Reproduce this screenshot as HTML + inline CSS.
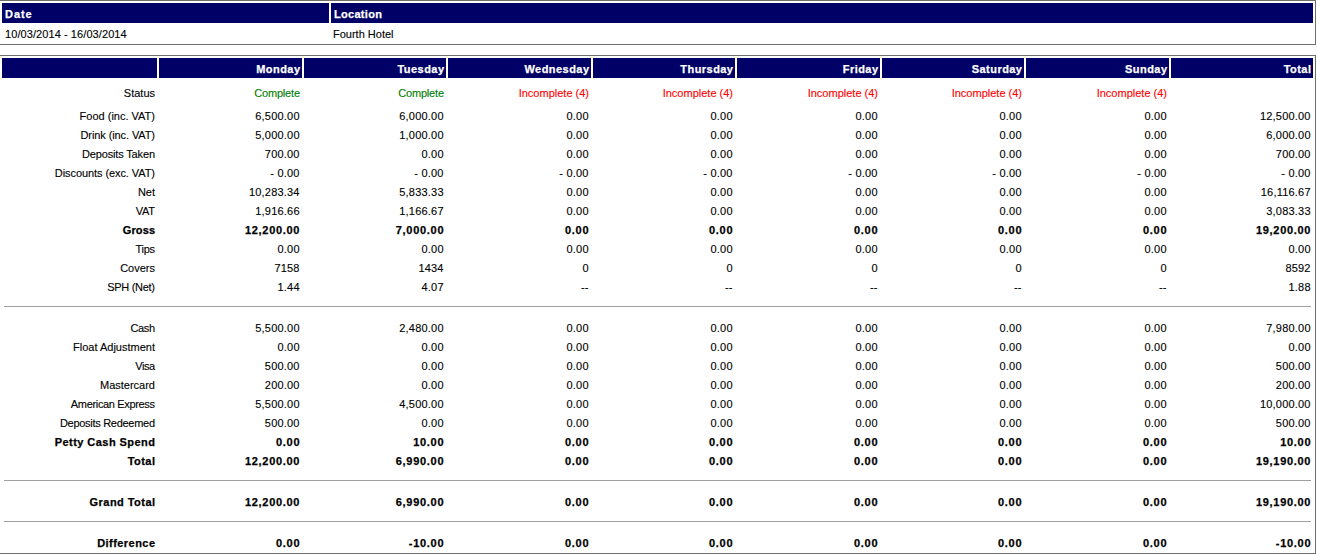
<!DOCTYPE html>
<html><head><meta charset="utf-8"><style>
html,body{margin:0;padding:0;background:#fff;width:1317px;height:554px;overflow:hidden;position:relative}
div,span{position:absolute;box-sizing:content-box}
span{font-family:"Liberation Sans",sans-serif;font-size:11px;line-height:13px;white-space:nowrap}
.r{-webkit-text-stroke:0.12px currentColor}
.b{font-weight:bold;-webkit-text-stroke:0.25px currentColor}
</style></head><body>
<div style="left:-1px;top:0px;width:1315px;height:43px;border:1px solid #6f6f6f"></div>
<div style="left:2px;top:3px;width:327px;height:20px;background:#000066"></div>
<div style="left:331px;top:3px;width:982px;height:20px;background:#000066"></div>
<span class="b" style="left:5px;top:8px;color:#fff;letter-spacing:0.95px">Date</span>
<span class="b" style="left:334px;top:8px;color:#fff;letter-spacing:0.3px">Location</span>
<span class="r" style="left:5px;top:28px;color:#000;letter-spacing:0.08px">10/03/2014 - 16/03/2014</span>
<span class="r" style="left:333px;top:28px;color:#000;letter-spacing:0.0px">Fourth Hotel</span>
<div style="left:-1px;top:55px;width:1315px;height:497px;border:1px solid #6f6f6f"></div>
<div style="left:2px;top:58px;width:155px;height:20px;background:#000066"></div>
<div style="left:159px;top:58px;width:143px;height:20px;background:#000066"></div>
<div style="left:304px;top:58px;width:142px;height:20px;background:#000066"></div>
<div style="left:448px;top:58px;width:143px;height:20px;background:#000066"></div>
<div style="left:593px;top:58px;width:142px;height:20px;background:#000066"></div>
<div style="left:737px;top:58px;width:143px;height:20px;background:#000066"></div>
<div style="left:882px;top:58px;width:142px;height:20px;background:#000066"></div>
<div style="left:1026px;top:58px;width:143px;height:20px;background:#000066"></div>
<div style="left:1171px;top:58px;width:142px;height:20px;background:#000066"></div>
<span class="b rt" style="right:1016.55px;top:63px;color:#fff;letter-spacing:0.45px">Monday</span>
<span class="b rt" style="right:872.55px;top:63px;color:#fff;letter-spacing:0.45px">Tuesday</span>
<span class="b rt" style="right:727.55px;top:63px;color:#fff;letter-spacing:0.45px">Wednesday</span>
<span class="b rt" style="right:583.55px;top:63px;color:#fff;letter-spacing:0.45px">Thursday</span>
<span class="b rt" style="right:438.55px;top:63px;color:#fff;letter-spacing:0.45px">Friday</span>
<span class="b rt" style="right:294.55px;top:63px;color:#fff;letter-spacing:0.45px">Saturday</span>
<span class="b rt" style="right:149.55px;top:63px;color:#fff;letter-spacing:0.45px">Sunday</span>
<span class="b rt" style="right:5.55px;top:63px;color:#fff;letter-spacing:0.45px">Total</span>
<span class="r rt" style="right:1162.00px;top:87px;color:#000;letter-spacing:0.0px">Status</span>
<span class="r rt" style="right:1017.20px;top:87px;color:#008000;letter-spacing:-0.2px">Complete</span>
<span class="r rt" style="right:873.20px;top:87px;color:#008000;letter-spacing:-0.2px">Complete</span>
<span class="r rt" style="right:728.00px;top:87px;color:#ff0000;letter-spacing:0.0px">Incomplete (4)</span>
<span class="r rt" style="right:584.00px;top:87px;color:#ff0000;letter-spacing:0.0px">Incomplete (4)</span>
<span class="r rt" style="right:439.00px;top:87px;color:#ff0000;letter-spacing:0.0px">Incomplete (4)</span>
<span class="r rt" style="right:295.00px;top:87px;color:#ff0000;letter-spacing:0.0px">Incomplete (4)</span>
<span class="r rt" style="right:150.00px;top:87px;color:#ff0000;letter-spacing:0.0px">Incomplete (4)</span>
<span class="r rt" style="right:1162.00px;top:110px;color:#000;letter-spacing:0.0px">Food (inc. VAT)</span>
<span class="r rt" style="right:1017.30px;top:110px;color:#000;letter-spacing:0.2px">6,500.00</span>
<span class="r rt" style="right:873.30px;top:110px;color:#000;letter-spacing:0.2px">6,000.00</span>
<span class="r rt" style="right:728.30px;top:110px;color:#000;letter-spacing:0.2px">0.00</span>
<span class="r rt" style="right:584.30px;top:110px;color:#000;letter-spacing:0.2px">0.00</span>
<span class="r rt" style="right:439.30px;top:110px;color:#000;letter-spacing:0.2px">0.00</span>
<span class="r rt" style="right:295.30px;top:110px;color:#000;letter-spacing:0.2px">0.00</span>
<span class="r rt" style="right:150.30px;top:110px;color:#000;letter-spacing:0.2px">0.00</span>
<span class="r rt" style="right:6.30px;top:110px;color:#000;letter-spacing:0.2px">12,500.00</span>
<span class="r rt" style="right:1162.10px;top:129px;color:#000;letter-spacing:-0.1px">Drink (inc. VAT)</span>
<span class="r rt" style="right:1017.30px;top:129px;color:#000;letter-spacing:0.2px">5,000.00</span>
<span class="r rt" style="right:873.30px;top:129px;color:#000;letter-spacing:0.2px">1,000.00</span>
<span class="r rt" style="right:728.30px;top:129px;color:#000;letter-spacing:0.2px">0.00</span>
<span class="r rt" style="right:584.30px;top:129px;color:#000;letter-spacing:0.2px">0.00</span>
<span class="r rt" style="right:439.30px;top:129px;color:#000;letter-spacing:0.2px">0.00</span>
<span class="r rt" style="right:295.30px;top:129px;color:#000;letter-spacing:0.2px">0.00</span>
<span class="r rt" style="right:150.30px;top:129px;color:#000;letter-spacing:0.2px">0.00</span>
<span class="r rt" style="right:6.30px;top:129px;color:#000;letter-spacing:0.2px">6,000.00</span>
<span class="r rt" style="right:1162.15px;top:148px;color:#000;letter-spacing:-0.15px">Deposits Taken</span>
<span class="r rt" style="right:1017.30px;top:148px;color:#000;letter-spacing:0.2px">700.00</span>
<span class="r rt" style="right:873.30px;top:148px;color:#000;letter-spacing:0.2px">0.00</span>
<span class="r rt" style="right:728.30px;top:148px;color:#000;letter-spacing:0.2px">0.00</span>
<span class="r rt" style="right:584.30px;top:148px;color:#000;letter-spacing:0.2px">0.00</span>
<span class="r rt" style="right:439.30px;top:148px;color:#000;letter-spacing:0.2px">0.00</span>
<span class="r rt" style="right:295.30px;top:148px;color:#000;letter-spacing:0.2px">0.00</span>
<span class="r rt" style="right:150.30px;top:148px;color:#000;letter-spacing:0.2px">0.00</span>
<span class="r rt" style="right:6.30px;top:148px;color:#000;letter-spacing:0.2px">700.00</span>
<span class="r rt" style="right:1162.08px;top:167px;color:#000;letter-spacing:-0.08px">Discounts (exc. VAT)</span>
<span class="r rt" style="right:1017.30px;top:167px;color:#000;letter-spacing:0.2px">- 0.00</span>
<span class="r rt" style="right:873.30px;top:167px;color:#000;letter-spacing:0.2px">- 0.00</span>
<span class="r rt" style="right:728.30px;top:167px;color:#000;letter-spacing:0.2px">- 0.00</span>
<span class="r rt" style="right:584.30px;top:167px;color:#000;letter-spacing:0.2px">- 0.00</span>
<span class="r rt" style="right:439.30px;top:167px;color:#000;letter-spacing:0.2px">- 0.00</span>
<span class="r rt" style="right:295.30px;top:167px;color:#000;letter-spacing:0.2px">- 0.00</span>
<span class="r rt" style="right:150.30px;top:167px;color:#000;letter-spacing:0.2px">- 0.00</span>
<span class="r rt" style="right:6.30px;top:167px;color:#000;letter-spacing:0.2px">- 0.00</span>
<span class="r rt" style="right:1162.00px;top:186px;color:#000;letter-spacing:0.0px">Net</span>
<span class="r rt" style="right:1017.30px;top:186px;color:#000;letter-spacing:0.2px">10,283.34</span>
<span class="r rt" style="right:873.30px;top:186px;color:#000;letter-spacing:0.2px">5,833.33</span>
<span class="r rt" style="right:728.30px;top:186px;color:#000;letter-spacing:0.2px">0.00</span>
<span class="r rt" style="right:584.30px;top:186px;color:#000;letter-spacing:0.2px">0.00</span>
<span class="r rt" style="right:439.30px;top:186px;color:#000;letter-spacing:0.2px">0.00</span>
<span class="r rt" style="right:295.30px;top:186px;color:#000;letter-spacing:0.2px">0.00</span>
<span class="r rt" style="right:150.30px;top:186px;color:#000;letter-spacing:0.2px">0.00</span>
<span class="r rt" style="right:6.30px;top:186px;color:#000;letter-spacing:0.2px">16,116.67</span>
<span class="r rt" style="right:1162.30px;top:205px;color:#000;letter-spacing:-0.3px">VAT</span>
<span class="r rt" style="right:1017.30px;top:205px;color:#000;letter-spacing:0.2px">1,916.66</span>
<span class="r rt" style="right:873.30px;top:205px;color:#000;letter-spacing:0.2px">1,166.67</span>
<span class="r rt" style="right:728.30px;top:205px;color:#000;letter-spacing:0.2px">0.00</span>
<span class="r rt" style="right:584.30px;top:205px;color:#000;letter-spacing:0.2px">0.00</span>
<span class="r rt" style="right:439.30px;top:205px;color:#000;letter-spacing:0.2px">0.00</span>
<span class="r rt" style="right:295.30px;top:205px;color:#000;letter-spacing:0.2px">0.00</span>
<span class="r rt" style="right:150.30px;top:205px;color:#000;letter-spacing:0.2px">0.00</span>
<span class="r rt" style="right:6.30px;top:205px;color:#000;letter-spacing:0.2px">3,083.33</span>
<span class="b rt" style="right:1161.90px;top:224px;color:#000;letter-spacing:0.1px">Gross</span>
<span class="b rt" style="right:1016.80px;top:224px;color:#000;letter-spacing:0.7px">12,200.00</span>
<span class="b rt" style="right:872.80px;top:224px;color:#000;letter-spacing:0.7px">7,000.00</span>
<span class="b rt" style="right:727.80px;top:224px;color:#000;letter-spacing:0.7px">0.00</span>
<span class="b rt" style="right:583.80px;top:224px;color:#000;letter-spacing:0.7px">0.00</span>
<span class="b rt" style="right:438.80px;top:224px;color:#000;letter-spacing:0.7px">0.00</span>
<span class="b rt" style="right:294.80px;top:224px;color:#000;letter-spacing:0.7px">0.00</span>
<span class="b rt" style="right:149.80px;top:224px;color:#000;letter-spacing:0.7px">0.00</span>
<span class="b rt" style="right:5.80px;top:224px;color:#000;letter-spacing:0.7px">19,200.00</span>
<span class="r rt" style="right:1162.30px;top:243px;color:#000;letter-spacing:-0.3px">Tips</span>
<span class="r rt" style="right:1017.30px;top:243px;color:#000;letter-spacing:0.2px">0.00</span>
<span class="r rt" style="right:873.30px;top:243px;color:#000;letter-spacing:0.2px">0.00</span>
<span class="r rt" style="right:728.30px;top:243px;color:#000;letter-spacing:0.2px">0.00</span>
<span class="r rt" style="right:584.30px;top:243px;color:#000;letter-spacing:0.2px">0.00</span>
<span class="r rt" style="right:439.30px;top:243px;color:#000;letter-spacing:0.2px">0.00</span>
<span class="r rt" style="right:295.30px;top:243px;color:#000;letter-spacing:0.2px">0.00</span>
<span class="r rt" style="right:150.30px;top:243px;color:#000;letter-spacing:0.2px">0.00</span>
<span class="r rt" style="right:6.30px;top:243px;color:#000;letter-spacing:0.2px">0.00</span>
<span class="r rt" style="right:1162.00px;top:262px;color:#000;letter-spacing:0.0px">Covers</span>
<span class="r rt" style="right:1017.30px;top:262px;color:#000;letter-spacing:0.2px">7158</span>
<span class="r rt" style="right:873.30px;top:262px;color:#000;letter-spacing:0.2px">1434</span>
<span class="r rt" style="right:728.30px;top:262px;color:#000;letter-spacing:0.2px">0</span>
<span class="r rt" style="right:584.30px;top:262px;color:#000;letter-spacing:0.2px">0</span>
<span class="r rt" style="right:439.30px;top:262px;color:#000;letter-spacing:0.2px">0</span>
<span class="r rt" style="right:295.30px;top:262px;color:#000;letter-spacing:0.2px">0</span>
<span class="r rt" style="right:150.30px;top:262px;color:#000;letter-spacing:0.2px">0</span>
<span class="r rt" style="right:6.30px;top:262px;color:#000;letter-spacing:0.2px">8592</span>
<span class="r rt" style="right:1162.29px;top:281px;color:#000;letter-spacing:-0.29px">SPH (Net)</span>
<span class="r rt" style="right:1017.30px;top:281px;color:#000;letter-spacing:0.2px">1.44</span>
<span class="r rt" style="right:873.30px;top:281px;color:#000;letter-spacing:0.2px">4.07</span>
<span class="r rt" style="right:728.30px;top:281px;color:#000;letter-spacing:0.2px">--</span>
<span class="r rt" style="right:584.30px;top:281px;color:#000;letter-spacing:0.2px">--</span>
<span class="r rt" style="right:439.30px;top:281px;color:#000;letter-spacing:0.2px">--</span>
<span class="r rt" style="right:295.30px;top:281px;color:#000;letter-spacing:0.2px">--</span>
<span class="r rt" style="right:150.30px;top:281px;color:#000;letter-spacing:0.2px">--</span>
<span class="r rt" style="right:6.30px;top:281px;color:#000;letter-spacing:0.2px">1.88</span>
<span class="r rt" style="right:1162.40px;top:322px;color:#000;letter-spacing:-0.4px">Cash</span>
<span class="r rt" style="right:1017.30px;top:322px;color:#000;letter-spacing:0.2px">5,500.00</span>
<span class="r rt" style="right:873.30px;top:322px;color:#000;letter-spacing:0.2px">2,480.00</span>
<span class="r rt" style="right:728.30px;top:322px;color:#000;letter-spacing:0.2px">0.00</span>
<span class="r rt" style="right:584.30px;top:322px;color:#000;letter-spacing:0.2px">0.00</span>
<span class="r rt" style="right:439.30px;top:322px;color:#000;letter-spacing:0.2px">0.00</span>
<span class="r rt" style="right:295.30px;top:322px;color:#000;letter-spacing:0.2px">0.00</span>
<span class="r rt" style="right:150.30px;top:322px;color:#000;letter-spacing:0.2px">0.00</span>
<span class="r rt" style="right:6.30px;top:322px;color:#000;letter-spacing:0.2px">7,980.00</span>
<span class="r rt" style="right:1162.00px;top:341px;color:#000;letter-spacing:0.0px">Float Adjustment</span>
<span class="r rt" style="right:1017.30px;top:341px;color:#000;letter-spacing:0.2px">0.00</span>
<span class="r rt" style="right:873.30px;top:341px;color:#000;letter-spacing:0.2px">0.00</span>
<span class="r rt" style="right:728.30px;top:341px;color:#000;letter-spacing:0.2px">0.00</span>
<span class="r rt" style="right:584.30px;top:341px;color:#000;letter-spacing:0.2px">0.00</span>
<span class="r rt" style="right:439.30px;top:341px;color:#000;letter-spacing:0.2px">0.00</span>
<span class="r rt" style="right:295.30px;top:341px;color:#000;letter-spacing:0.2px">0.00</span>
<span class="r rt" style="right:150.30px;top:341px;color:#000;letter-spacing:0.2px">0.00</span>
<span class="r rt" style="right:6.30px;top:341px;color:#000;letter-spacing:0.2px">0.00</span>
<span class="r rt" style="right:1162.50px;top:360px;color:#000;letter-spacing:-0.5px">Visa</span>
<span class="r rt" style="right:1017.30px;top:360px;color:#000;letter-spacing:0.2px">500.00</span>
<span class="r rt" style="right:873.30px;top:360px;color:#000;letter-spacing:0.2px">0.00</span>
<span class="r rt" style="right:728.30px;top:360px;color:#000;letter-spacing:0.2px">0.00</span>
<span class="r rt" style="right:584.30px;top:360px;color:#000;letter-spacing:0.2px">0.00</span>
<span class="r rt" style="right:439.30px;top:360px;color:#000;letter-spacing:0.2px">0.00</span>
<span class="r rt" style="right:295.30px;top:360px;color:#000;letter-spacing:0.2px">0.00</span>
<span class="r rt" style="right:150.30px;top:360px;color:#000;letter-spacing:0.2px">0.00</span>
<span class="r rt" style="right:6.30px;top:360px;color:#000;letter-spacing:0.2px">500.00</span>
<span class="r rt" style="right:1162.00px;top:379px;color:#000;letter-spacing:0.0px">Mastercard</span>
<span class="r rt" style="right:1017.30px;top:379px;color:#000;letter-spacing:0.2px">200.00</span>
<span class="r rt" style="right:873.30px;top:379px;color:#000;letter-spacing:0.2px">0.00</span>
<span class="r rt" style="right:728.30px;top:379px;color:#000;letter-spacing:0.2px">0.00</span>
<span class="r rt" style="right:584.30px;top:379px;color:#000;letter-spacing:0.2px">0.00</span>
<span class="r rt" style="right:439.30px;top:379px;color:#000;letter-spacing:0.2px">0.00</span>
<span class="r rt" style="right:295.30px;top:379px;color:#000;letter-spacing:0.2px">0.00</span>
<span class="r rt" style="right:150.30px;top:379px;color:#000;letter-spacing:0.2px">0.00</span>
<span class="r rt" style="right:6.30px;top:379px;color:#000;letter-spacing:0.2px">200.00</span>
<span class="r rt" style="right:1162.34px;top:398px;color:#000;letter-spacing:-0.34px">American Express</span>
<span class="r rt" style="right:1017.30px;top:398px;color:#000;letter-spacing:0.2px">5,500.00</span>
<span class="r rt" style="right:873.30px;top:398px;color:#000;letter-spacing:0.2px">4,500.00</span>
<span class="r rt" style="right:728.30px;top:398px;color:#000;letter-spacing:0.2px">0.00</span>
<span class="r rt" style="right:584.30px;top:398px;color:#000;letter-spacing:0.2px">0.00</span>
<span class="r rt" style="right:439.30px;top:398px;color:#000;letter-spacing:0.2px">0.00</span>
<span class="r rt" style="right:295.30px;top:398px;color:#000;letter-spacing:0.2px">0.00</span>
<span class="r rt" style="right:150.30px;top:398px;color:#000;letter-spacing:0.2px">0.00</span>
<span class="r rt" style="right:6.30px;top:398px;color:#000;letter-spacing:0.2px">10,000.00</span>
<span class="r rt" style="right:1162.29px;top:417px;color:#000;letter-spacing:-0.29px">Deposits Redeemed</span>
<span class="r rt" style="right:1017.30px;top:417px;color:#000;letter-spacing:0.2px">500.00</span>
<span class="r rt" style="right:873.30px;top:417px;color:#000;letter-spacing:0.2px">0.00</span>
<span class="r rt" style="right:728.30px;top:417px;color:#000;letter-spacing:0.2px">0.00</span>
<span class="r rt" style="right:584.30px;top:417px;color:#000;letter-spacing:0.2px">0.00</span>
<span class="r rt" style="right:439.30px;top:417px;color:#000;letter-spacing:0.2px">0.00</span>
<span class="r rt" style="right:295.30px;top:417px;color:#000;letter-spacing:0.2px">0.00</span>
<span class="r rt" style="right:150.30px;top:417px;color:#000;letter-spacing:0.2px">0.00</span>
<span class="r rt" style="right:6.30px;top:417px;color:#000;letter-spacing:0.2px">500.00</span>
<span class="b rt" style="right:1161.55px;top:436px;color:#000;letter-spacing:0.45px">Petty Cash Spend</span>
<span class="b rt" style="right:1016.80px;top:436px;color:#000;letter-spacing:0.7px">0.00</span>
<span class="b rt" style="right:872.80px;top:436px;color:#000;letter-spacing:0.7px">10.00</span>
<span class="b rt" style="right:727.80px;top:436px;color:#000;letter-spacing:0.7px">0.00</span>
<span class="b rt" style="right:583.80px;top:436px;color:#000;letter-spacing:0.7px">0.00</span>
<span class="b rt" style="right:438.80px;top:436px;color:#000;letter-spacing:0.7px">0.00</span>
<span class="b rt" style="right:294.80px;top:436px;color:#000;letter-spacing:0.7px">0.00</span>
<span class="b rt" style="right:149.80px;top:436px;color:#000;letter-spacing:0.7px">0.00</span>
<span class="b rt" style="right:5.80px;top:436px;color:#000;letter-spacing:0.7px">10.00</span>
<span class="b rt" style="right:1161.55px;top:455px;color:#000;letter-spacing:0.45px">Total</span>
<span class="b rt" style="right:1016.80px;top:455px;color:#000;letter-spacing:0.7px">12,200.00</span>
<span class="b rt" style="right:872.80px;top:455px;color:#000;letter-spacing:0.7px">6,990.00</span>
<span class="b rt" style="right:727.80px;top:455px;color:#000;letter-spacing:0.7px">0.00</span>
<span class="b rt" style="right:583.80px;top:455px;color:#000;letter-spacing:0.7px">0.00</span>
<span class="b rt" style="right:438.80px;top:455px;color:#000;letter-spacing:0.7px">0.00</span>
<span class="b rt" style="right:294.80px;top:455px;color:#000;letter-spacing:0.7px">0.00</span>
<span class="b rt" style="right:149.80px;top:455px;color:#000;letter-spacing:0.7px">0.00</span>
<span class="b rt" style="right:5.80px;top:455px;color:#000;letter-spacing:0.7px">19,190.00</span>
<span class="b rt" style="right:1161.55px;top:496px;color:#000;letter-spacing:0.45px">Grand Total</span>
<span class="b rt" style="right:1016.80px;top:496px;color:#000;letter-spacing:0.7px">12,200.00</span>
<span class="b rt" style="right:872.80px;top:496px;color:#000;letter-spacing:0.7px">6,990.00</span>
<span class="b rt" style="right:727.80px;top:496px;color:#000;letter-spacing:0.7px">0.00</span>
<span class="b rt" style="right:583.80px;top:496px;color:#000;letter-spacing:0.7px">0.00</span>
<span class="b rt" style="right:438.80px;top:496px;color:#000;letter-spacing:0.7px">0.00</span>
<span class="b rt" style="right:294.80px;top:496px;color:#000;letter-spacing:0.7px">0.00</span>
<span class="b rt" style="right:149.80px;top:496px;color:#000;letter-spacing:0.7px">0.00</span>
<span class="b rt" style="right:5.80px;top:496px;color:#000;letter-spacing:0.7px">19,190.00</span>
<span class="b rt" style="right:1161.55px;top:537px;color:#000;letter-spacing:0.45px">Difference</span>
<span class="b rt" style="right:1016.80px;top:537px;color:#000;letter-spacing:0.7px">0.00</span>
<span class="b rt" style="right:872.80px;top:537px;color:#000;letter-spacing:0.7px">-10.00</span>
<span class="b rt" style="right:727.80px;top:537px;color:#000;letter-spacing:0.7px">0.00</span>
<span class="b rt" style="right:583.80px;top:537px;color:#000;letter-spacing:0.7px">0.00</span>
<span class="b rt" style="right:438.80px;top:537px;color:#000;letter-spacing:0.7px">0.00</span>
<span class="b rt" style="right:294.80px;top:537px;color:#000;letter-spacing:0.7px">0.00</span>
<span class="b rt" style="right:149.80px;top:537px;color:#000;letter-spacing:0.7px">0.00</span>
<span class="b rt" style="right:5.80px;top:537px;color:#000;letter-spacing:0.7px">-10.00</span>
<div style="left:4px;top:306px;width:1307px;height:1px;background:#a0a0a0"></div>
<div style="left:4px;top:480px;width:1307px;height:1px;background:#a0a0a0"></div>
<div style="left:4px;top:521px;width:1307px;height:1px;background:#a0a0a0"></div>
</body></html>
